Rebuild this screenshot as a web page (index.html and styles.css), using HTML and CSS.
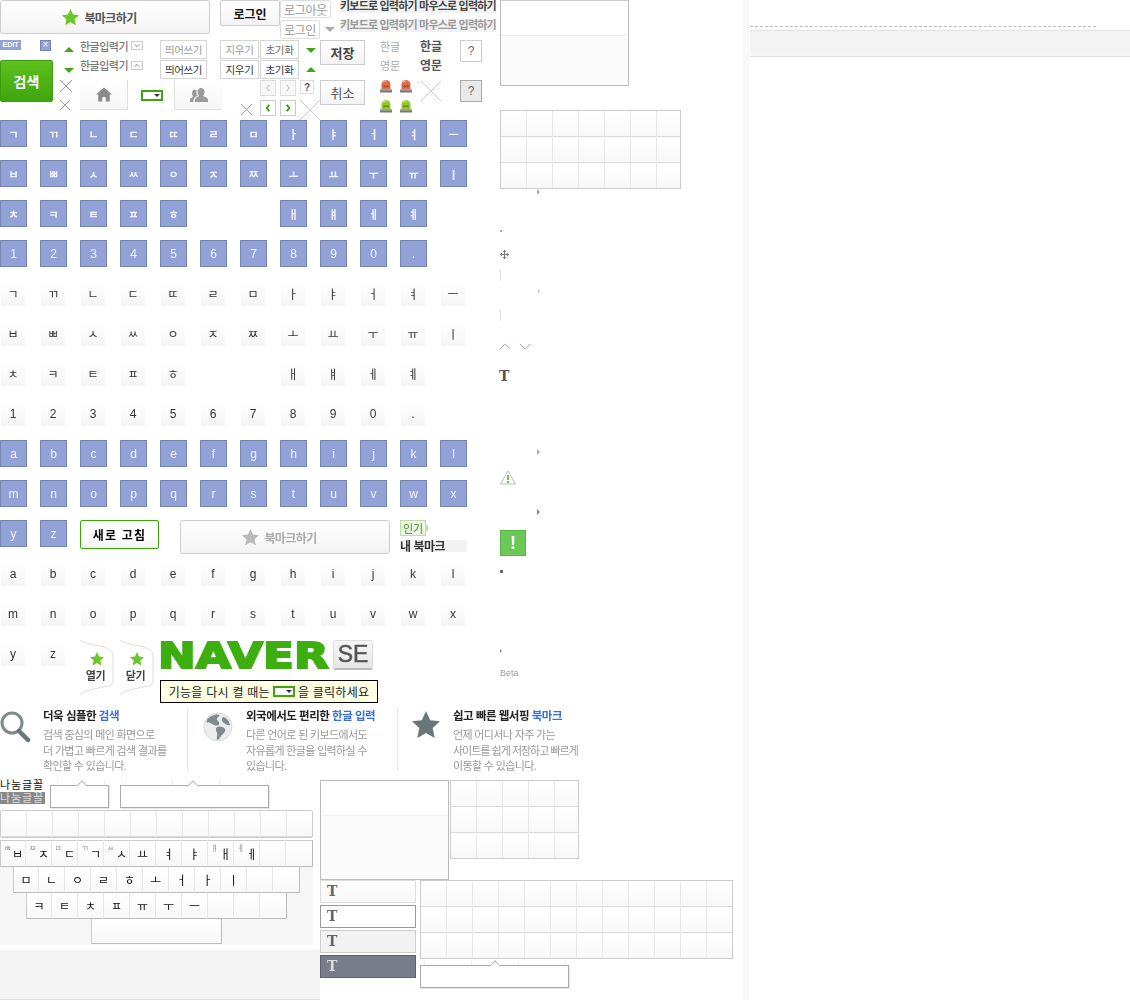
FILE: index.html
```html
<!DOCTYPE html>
<html lang="ko">
<head>
  <meta charset="UTF-8">
  <title>Naver SE sprite</title>
  <link rel="stylesheet" href="styles.css">
</head>
<body>
<svg class="defs" width="0" height="0">
  <symbol id="star" viewBox="0 0 20 20"><path d="M10 0l3 6.600 7 .8-5.200 4.800 1.400 7L10 15.700l-6.200 3.500 1.400-7L0 7.400l7-.8z"/></symbol>
  <symbol id="cross" viewBox="0 0 20 20"><path d="M0 0L20 20M20 0L0 20" fill="none" stroke="currentColor" stroke-width="1" vector-effect="non-scaling-stroke"/></symbol>
  <symbol id="lamp" viewBox="0 0 12 13"><path d="M1.500 9.500V4.500C1.500 2 3.500 0 6 0s4.500 2 4.500 4.500v5z" fill="currentColor"/><path d="M3 2.500C4 1.300 5.500 1 6.500 1" stroke="#fff" stroke-opacity=".6" fill="none"/><path d="M4 5v2.500M8 5v2.500M4.500 6.300h3" stroke="#5a3a20" stroke-opacity=".6" fill="none"/><path d="M0 9.500h12V12.500H0z" fill="#777"/><path d="M0 9.500h12v1H0z" fill="#aaa"/></symbol>
</svg>

<div class="sheet">

  <!-- big key grid, 40px cells -->
  <div class="keys">
    <b class="k ko">ㄱ</b><b class="k ko">ㄲ</b><b class="k ko">ㄴ</b><b class="k ko">ㄷ</b><b class="k ko">ㄸ</b><b class="k ko">ㄹ</b><b class="k ko">ㅁ</b><b class="k ko">ㅏ</b><b class="k ko">ㅑ</b><b class="k ko">ㅓ</b><b class="k ko">ㅕ</b><b class="k ko">ㅡ</b>
    <b class="k ko">ㅂ</b><b class="k ko">ㅃ</b><b class="k ko">ㅅ</b><b class="k ko">ㅆ</b><b class="k ko">ㅇ</b><b class="k ko">ㅈ</b><b class="k ko">ㅉ</b><b class="k ko">ㅗ</b><b class="k ko">ㅛ</b><b class="k ko">ㅜ</b><b class="k ko">ㅠ</b><b class="k ko">ㅣ</b>
    <b class="k ko">ㅊ</b><b class="k ko">ㅋ</b><b class="k ko">ㅌ</b><b class="k ko">ㅍ</b><b class="k ko">ㅎ</b><b class="k ko at8">ㅐ</b><b class="k ko">ㅒ</b><b class="k ko">ㅔ</b><b class="k ko">ㅖ</b>
    <b class="k at1">1</b><b class="k">2</b><b class="k">3</b><b class="k">4</b><b class="k">5</b><b class="k">6</b><b class="k">7</b><b class="k">8</b><b class="k">9</b><b class="k">0</b><b class="k">.</b>

    <b class="l at1">ㄱ</b><b class="l">ㄲ</b><b class="l">ㄴ</b><b class="l">ㄷ</b><b class="l">ㄸ</b><b class="l">ㄹ</b><b class="l">ㅁ</b><b class="l">ㅏ</b><b class="l">ㅑ</b><b class="l">ㅓ</b><b class="l">ㅕ</b><b class="l">ㅡ</b>
    <b class="l">ㅂ</b><b class="l">ㅃ</b><b class="l">ㅅ</b><b class="l">ㅆ</b><b class="l">ㅇ</b><b class="l">ㅈ</b><b class="l">ㅉ</b><b class="l">ㅗ</b><b class="l">ㅛ</b><b class="l">ㅜ</b><b class="l">ㅠ</b><b class="l">ㅣ</b>
    <b class="l">ㅊ</b><b class="l">ㅋ</b><b class="l">ㅌ</b><b class="l">ㅍ</b><b class="l">ㅎ</b><b class="l at8">ㅐ</b><b class="l">ㅒ</b><b class="l">ㅔ</b><b class="l">ㅖ</b>
    <b class="l at1">1</b><b class="l">2</b><b class="l">3</b><b class="l">4</b><b class="l">5</b><b class="l">6</b><b class="l">7</b><b class="l">8</b><b class="l">9</b><b class="l">0</b><b class="l">.</b>

    <b class="k at1">a</b><b class="k">b</b><b class="k">c</b><b class="k">d</b><b class="k">e</b><b class="k">f</b><b class="k">g</b><b class="k">h</b><b class="k">i</b><b class="k">j</b><b class="k">k</b><b class="k">l</b>
    <b class="k">m</b><b class="k">n</b><b class="k">o</b><b class="k">p</b><b class="k">q</b><b class="k">r</b><b class="k">s</b><b class="k">t</b><b class="k">u</b><b class="k">v</b><b class="k">w</b><b class="k">x</b>
    <b class="k">y</b><b class="k">z</b>

    <b class="l at1">a</b><b class="l">b</b><b class="l">c</b><b class="l">d</b><b class="l">e</b><b class="l">f</b><b class="l">g</b><b class="l">h</b><b class="l">i</b><b class="l">j</b><b class="l">k</b><b class="l">l</b>
    <b class="l">m</b><b class="l">n</b><b class="l">o</b><b class="l">p</b><b class="l">q</b><b class="l">r</b><b class="l">s</b><b class="l">t</b><b class="l">u</b><b class="l">v</b><b class="l">w</b><b class="l">x</b>
    <b class="l">y</b><b class="l">z</b>
  </div>

  <!-- top buttons -->
  <div class="s btn bm bm-on"><svg class="bm-star"><use href="#star"/></svg>북마크하기</div>
  <div class="s btn login">로그인</div>
  <div class="s btn thin logout">로그아웃</div>
  <div class="s btn thin login2">로그인</div>
  <i class="s tri tri-gray"></i>
  <div class="s mode mode-1">키보드로 입력하기 마우스로 입력하기</div>
  <div class="s mode mode-2">키보드로 입력하기 마우스로 입력하기</div>

  <div class="s edit">EDIT</div>
  <div class="s xbadge">×</div>
  <i class="s tri tri-up a1"></i>
  <i class="s tri tri-dn a2"></i>
  <div class="s hg hg-1">한글입력기</div>
  <div class="s hg hg-2">한글입력기</div>
  <div class="s chev chev-1"><svg viewBox="0 0 12 9"><path d="M3 3l3 3 3-3" fill="none" stroke="#666"/></svg></div>
  <div class="s chev chev-2"><svg viewBox="0 0 12 9"><path d="M3 6l3-3 3 3" fill="none" stroke="#666"/></svg></div>

  <div class="s btn sm sp-1">띄어쓰기</div>
  <div class="s btn sm dark sp-2">띄어쓰기</div>
  <div class="s btn sm er-1">지우기</div>
  <div class="s btn sm dark er-2">지우기</div>
  <div class="s btn sm mid in-1">초기화</div>
  <div class="s btn sm dark in-2">초기화</div>
  <i class="s tri tri-dn a3"></i>
  <i class="s tri tri-up a4"></i>
  <div class="s btn big save">저장</div>
  <div class="s btn big cancel">취소</div>

  <div class="s lang lang-1">한글</div>
  <div class="s lang on lang-2">한글</div>
  <div class="s lang lang-3">영문</div>
  <div class="s lang on lang-4">영문</div>
  <div class="s btn q q-1">?</div>
  <div class="s btn q q-2">?</div>

  <div class="s search">검색</div>
  <svg class="s x x-1"><use href="#cross"/></svg>
  <svg class="s x x-2"><use href="#cross"/></svg>
  <svg class="s x x-3"><use href="#cross"/></svg>
  <svg class="s x x-4"><use href="#cross"/></svg>
  <svg class="s x x-5"><use href="#cross"/></svg>

  <div class="s tab tab-home">
    <svg width="16" height="15" viewBox="0 0 18 16"><path d="M9 0L0 8h2.500v8h4.500v-5h4v5h4.500V8H18z" fill="#8b8b8b"/></svg>
  </div>
  <div class="s toggle toggle-1"><i></i></div>
  <div class="s tab tab-people">
    <svg width="18" height="14" viewBox="0 0 18 14"><path d="M11 0c2 0 3.500 1.500 3.500 3.800S13.500 7 13.200 8c1.800.8 4.800 2 4.800 3.500V14H5v-2.500c0-1.500 3-2.700 3.800-3.500C8.500 7 7.500 6 7.500 3.800S9 0 11 0zM5 1.500c.8 0 1.300.3 1.700.7-.8 2.300-.2 4.200 1 5.600C6 8.800 4 9.800 3.500 11.500V14H0v-2.500C0 10.300 2 9.500 3 8.500 2.500 7.500 2 6.800 2 4.800S3.300 1.500 5 1.500z" fill="#9a9a9a"/></svg>
  </div>

  <div class="s pg pg-1"><svg viewBox="0 0 16 16"><path d="M9.500 4.500L6.500 8l3 3.500" fill="none" stroke="#ccc" stroke-width="1.500"/></svg></div>
  <div class="s pg pg-2"><svg viewBox="0 0 16 16"><path d="M6.500 4.500L9.500 8l-3 3.500" fill="none" stroke="#ccc" stroke-width="1.500"/></svg></div>
  <div class="s btn q-small">?</div>
  <div class="s pg pg-3"><svg viewBox="0 0 16 16"><path d="M9.500 4.500L6.500 8l3 3.500" fill="none" stroke="#2a9c08" stroke-width="2"/></svg></div>
  <div class="s pg pg-4"><svg viewBox="0 0 16 16"><path d="M6.500 4.500L9.500 8l-3 3.500" fill="none" stroke="#2a9c08" stroke-width="2"/></svg></div>

  <svg class="s lamp lamp-1"><use href="#lamp"/></svg>
  <svg class="s lamp lamp-2"><use href="#lamp"/></svg>
  <svg class="s lamp lamp-3"><use href="#lamp"/></svg>
  <svg class="s lamp lamp-4"><use href="#lamp"/></svg>

  <!-- mid row items over the keys -->
  <div class="s refresh">새로 고침</div>
  <div class="s btn bm bm-off"><svg class="bm-star"><use href="#star"/></svg>북마크하기</div>
  <div class="s popular">인기</div>
  <i class="s popular-tip"></i>
  <div class="s mybm">내 북마크</div>

  <div class="s flag flag-1">
    <svg class="flag-bg" viewBox="0 0 34 55"><path d="M0 .500C10 6 24 5 30 10c3 2 3 4 3 7v23c0 4-2 5-5 6-8 2-20 3-28 8.500" fill="#fff" stroke="#ddd"/></svg>
    <svg class="flag-star"><use href="#star"/></svg>
    <span>열기</span>
  </div>
  <div class="s flag flag-2">
    <svg class="flag-bg" viewBox="0 0 34 55"><path d="M0 .500C10 6 24 5 30 10c3 2 3 4 3 7v23c0 4-2 5-5 6-8 2-20 3-28 8.500" fill="#fff" stroke="#ddd"/></svg>
    <svg class="flag-star"><use href="#star"/></svg>
    <span>닫기</span>
  </div>

  <div class="s logo">NAVER</div>
  <div class="s se">SE</div>
  <div class="s hint">기능을 다시 켤 때는 <span class="toggle toggle-2"><i></i></span> 을 클릭하세요</div>

  <!-- promo row -->
  <div class="s promo">
    <div class="promo-item item-1">
      <svg width="31" height="32" viewBox="0 0 31 32"><circle cx="12" cy="12" r="10" fill="#fff" stroke="#7d8b8e" stroke-width="3"/><path d="M19 20l9 9" stroke="#667578" stroke-width="4.500" stroke-linecap="round"/></svg>
      <div>
        <h3>더욱 심플한 <em>검색</em></h3>
        <p>검색 중심의 메인 화면으로<br>더 가볍고 빠르게 검색 결과를<br>확인할 수 있습니다.</p>
      </div>
    </div>
    <div class="promo-item item-2">
      <svg width="30" height="32" viewBox="0 0 30 32"><circle cx="15" cy="16" r="14" fill="#eceeee" stroke="#d5d8d8"/><path d="M7 6c3-2 7-3 9-2 1 2-2 2-2 4s3 2 2 5-5 1-7 0-4-3-5-1C3 9 5 7 7 6zM14 16c3-1 7 0 8 2s-1 4-3 6-3 5-5 5c-1-3 1-5 0-7s-2-4 0-6zM20 6c3 0 6 4 7 8-3 1-4-1-6-2s-3-4-1-6z" fill="#7d8b8e"/></svg>
      <div>
        <h3>외국에서도 편리한 <em>한글 입력</em></h3>
        <p>다른 언어로 된 키보드에서도<br>자유롭게 한글을 입력하실 수<br>있습니다.</p>
      </div>
    </div>
    <div class="promo-item item-3">
      <svg width="28" height="28" viewBox="0 0 20 20" fill="#67777a"><use href="#star"/></svg>
      <div>
        <h3>쉽고 빠른 웹서핑 <em>북마크</em></h3>
        <p>언제 어디서나 자주 가는<br><span class="tight">사이트를 쉽게 저장하고 빠르게</span><br>이동할 수 있습니다.</p>
      </div>
    </div>
  </div>

  <!-- bottom left -->
  <div class="s font-1">나눔글꼴</div>
  <div class="s font-2">나눔글꼴</div>
  <i class="s tabs tabs-1"></i>
  <i class="s tabs tabs-2"></i>
  <div class="s pop pop-1"></div>
  <div class="s pop pop-2"></div>

  <div class="s grid grid-12 g-a"></div>
  <div class="s kbd-bg"></div>
  <div class="s kbd">
    <div class="kbd-row">
      <div class="c"><u>ㅃ</u>ㅂ</div><div class="c"><u>ㅉ</u>ㅈ</div><div class="c"><u>ㄸ</u>ㄷ</div><div class="c"><u>ㄲ</u>ㄱ</div><div class="c"><u>ㅆ</u>ㅅ</div><div class="c">ㅛ</div><div class="c">ㅕ</div><div class="c">ㅑ</div><div class="c"><u>ㅒ</u>ㅐ</div><div class="c"><u>ㅖ</u>ㅔ</div><div class="c"></div><div class="c"></div>
    </div>
    <div class="kbd-row row-3">
      <div class="c">ㅁ</div><div class="c">ㄴ</div><div class="c">ㅇ</div><div class="c">ㄹ</div><div class="c">ㅎ</div><div class="c">ㅗ</div><div class="c">ㅓ</div><div class="c">ㅏ</div><div class="c">ㅣ</div><div class="c"></div><div class="c"></div>
    </div>
    <div class="kbd-row row-4">
      <div class="c">ㅋ</div><div class="c">ㅌ</div><div class="c">ㅊ</div><div class="c">ㅍ</div><div class="c">ㅠ</div><div class="c">ㅜ</div><div class="c">ㅡ</div><div class="c"></div><div class="c"></div><div class="c"></div>
    </div>
    <div class="kbd-row row-5"><div class="c space"></div></div>
  </div>
  <div class="s band"></div>

  <!-- bottom middle -->
  <div class="s split split-1"></div>
  <div class="s grid grid-5"></div>
  <div class="s tbtn t-1"><span>T</span></div>
  <div class="s tbtn t-2"><span>T</span></div>
  <div class="s tbtn t-3"><span>T</span></div>
  <div class="s tbtn t-4"><span>T</span></div>
  <div class="s grid grid-12 g-b"></div>
  <i class="s tabs tabs-3"></i>
  <div class="s pop pop-3"></div>

  <!-- right column -->
  <div class="s split split-2"></div>
  <div class="s grid grid-7"></div>
  <i class="s mini arr-1"></i>
  <i class="s dot dot-1"></i>
  <svg class="s move" viewBox="0 0 9 9"><path d="M4.500 0v9M0 4.500h9" stroke="#777"/><path d="M4.500 0l-2 2h4zM4.500 9l-2-2h4zM0 4.500l2-2v4zM9 4.500l-2-2v4z" fill="#777"/></svg>
  <i class="s vline v-1"></i>
  <i class="s mini arr-2"></i>
  <i class="s vline v-2"></i>
  <svg class="s caret caret-up" viewBox="0 0 14 8"><path d="M1 7l6-6 6 6" fill="none" stroke="#999"/></svg>
  <svg class="s caret caret-dn" viewBox="0 0 14 8"><path d="M1 1l6 6 6-6" fill="none" stroke="#999"/></svg>
  <div class="s serif-t">T</div>
  <i class="s mini arr-3"></i>
  <svg class="s warn" viewBox="0 0 16 15"><path d="M8 1l7.500 13H.5z" fill="#fff" stroke="#bbb"/><path d="M8 5v5M8 11v2" stroke="#3fa51c" stroke-width="1.500"/></svg>
  <i class="s mini arr-4"></i>
  <div class="s alert">!</div>
  <i class="s dot dot-2"></i>
  <i class="s mini arr-5"></i>
  <div class="s beta">Beta</div>

  <!-- far right -->
  <div class="s stripe"></div>
  <div class="s dash"></div>
  <div class="s bar"></div>
</div>
</body>
</html>
```
FILE: styles.css
```css
* { box-sizing: border-box; }

html, body {
  margin: 0;
  background: #fff;
}

body {
  font-family: "Noto Sans CJK KR", "Liberation Sans", sans-serif;
  font-size: 12px;
  color: #333;
}

.defs { position: absolute; }

.sheet {
  position: relative;
  width: 1130px;
  height: 1000px;
  overflow: hidden;
}

.s { position: absolute; }

/* keys */
.keys {
  position: absolute;
  left: 0;
  top: 120px;
  width: 480px;
  display: grid;
  grid-template-columns: repeat(12, 40px);
  grid-auto-rows: 40px;
  justify-items: start;
  align-items: start;
  will-change: transform;
}

.k, .l {
  display: flex;
  align-items: center;
  justify-content: center;
  font-weight: 400;
  font-family: "Liberation Sans", "Noto Sans CJK KR", sans-serif;
}

.k {
  width: 27px;
  height: 27px;
  background: #92a2d6;
  border: 1px solid #7484ae;
  color: #f0f3fc;
  font-size: 12px;
}

.k.ko { font-weight: 700; font-size: 11px; }

.l {
  width: 24px;
  height: 24px;
  margin: 2px 0 0 1px;
  padding-bottom: 1px;
  background: linear-gradient(#fff, #f5f5f5);
  color: #333;
  font-size: 12px;
}

.at1 { grid-column-start: 1; }
.at8 { grid-column-start: 8; }

/* buttons */
.btn {
  display: flex;
  align-items: center;
  justify-content: center;
  background: linear-gradient(#fff, #f3f3f3);
  border: 1px solid #ccc;
  border-radius: 2px;
  white-space: nowrap;
}

.bm {
  width: 210px;
  height: 34px;
  gap: 5px;
  font-size: 12px;
  font-weight: 700;
  letter-spacing: -0.6px;
  border-radius: 3px;
  padding-right: 11px;
}

.bm-star { width: 17px; height: 17px; }
.bm-on { left: 0; top: 0; color: #555; }
.bm-on .bm-star { fill: #6cc52a; }
.bm-off { left: 180px; top: 520px; color: #aaa; }
.bm-off .bm-star { fill: #bbb; }

.login { left: 220px; top: 0; width: 60px; height: 26px; color: #111; font-weight: 700; }

.thin { color: #999; background: #fff; border-color: #ddd; font-size: 12px; letter-spacing: -0.3px; }
.logout { left: 280px; top: 0; width: 51px; height: 18px; }
.login2 { left: 280px; top: 20px; width: 40px; height: 19px; }

.tri { width: 0; height: 0; border-left: 5px solid transparent; border-right: 5px solid transparent; }
.tri-gray { left: 325px; top: 27px; border-top: 5px solid #aaa; }
.tri-up { border-bottom: 5px solid #3fa51c; }
.tri-dn { border-top: 5px solid #3fa51c; }
.a1 { left: 64px; top: 47px; }
.a2 { left: 64px; top: 68px; }
.a3 { left: 306px; top: 48px; }
.a4 { left: 306px; top: 67px; }

.mode {
  left: 340px;
  font-family: "Liberation Sans", "Noto Sans CJK KR", sans-serif;
  font-size: 11px;
  font-weight: 700;
  line-height: 13px;
  letter-spacing: -0.8px;
  white-space: nowrap;
  background: #f2f2f2;
}
.mode-1 { top: 0; color: #444; }
.mode-2 { top: 19px; color: #999; }

.edit {
  left: 0; top: 40px; width: 21px; height: 10px;
  background: #92a2d6; color: #fff;
  font: 700 7px/10px "Liberation Sans", sans-serif;
  text-align: center;
}

.xbadge {
  left: 40px; top: 40px; width: 11px; height: 11px;
  background: #92a2d6; border: 1px solid #7484ae; color: #fff;
  font: 400 10px/8px "Liberation Sans", sans-serif;
  text-align: center;
}

.hg { left: 80px; font-size: 11px; line-height: 12px; font-weight: 500; letter-spacing: -0.5px; color: #777; }
.hg-1 { top: 40px; }
.hg-2 { top: 59px; }

.chev { left: 131px; width: 12px; height: 9px; border: 1px solid #ccc; background: #fff; }
.chev svg { display: block; width: 10px; height: 7px; }
.chev-1 { top: 41px; }
.chev-2 { top: 61px; }

.sm { width: 39px; height: 19px; font-size: 10.500px; letter-spacing: -0.4px; color: #999; background: #fff; border-color: #d5d5d5; border-radius: 0; }
.sm.dark { color: #333; }
.sm.mid { color: #666; }
.sp-1, .sp-2 { left: 160px; width: 47px; }
.sp-1 { top: 40px; }
.sp-2 { top: 60px; }
.er-1, .er-2 { left: 220px; }
.in-1, .in-2 { left: 260px; }
.er-1, .in-1 { top: 40px; }
.er-2, .in-2 { top: 60px; }

.big { left: 320px; width: 45px; height: 25px; font-size: 13px; border-radius: 0; }
.save { top: 40px; font-weight: 700; color: #444; }
.cancel { top: 80px; color: #555; }

.lang { font-size: 11px; line-height: 12px; color: #aaa; }
.lang.on { font-weight: 700; color: #555; font-size: 12px; }
.lang-1, .lang-3 { left: 380px; }
.lang-2, .lang-4 { left: 420px; }
.lang-1, .lang-2 { top: 40px; }
.lang-3, .lang-4 { top: 59px; }

.q { width: 22px; height: 22px; color: #666; border-radius: 0; font-family: "Liberation Sans", sans-serif; }
.q-1 { left: 460px; top: 40px; background: #fff; }
.q-2 { left: 460px; top: 80px; background: #e9e9e9; border-color: #aaa; }

.search {
  left: 0; top: 60px; width: 53px; height: 42px;
  display: flex; align-items: center; justify-content: center;
  background: linear-gradient(#5fc01f, #3da60c);
  border: 1px solid #3b9d0b;
  border-radius: 2px;
  color: #fff;
  font-size: 14px;
  font-weight: 700;
}

.x { color: #999; }
.x-1 { left: 60px; top: 80px; width: 12px; height: 12px; }
.x-2 { left: 60px; top: 100px; width: 10px; height: 10px; }
.x-3 { left: 241px; top: 104px; width: 11px; height: 11px; }
.x-4 { left: 300px; top: 100px; width: 20px; height: 20px; color: #ccc; }
.x-5 { left: 421px; top: 81px; width: 20px; height: 20px; color: #ccc; }

.tab {
  top: 80px; width: 48px; height: 30px;
  display: flex; align-items: center; justify-content: center;
  background: linear-gradient(#fff, #f6f6f6);
  border-bottom: 1px solid #ddd;
}
.tab-home { left: 80px; border-right: 1px solid #ddd; }
.tab-people { left: 174px; border-left: 1px solid #ddd; }

.toggle {
  display: inline-block;
  position: relative;
  width: 22px; height: 11px;
  background: #fff;
  border: 2px solid #3da60c;
}
.toggle i {
  position: absolute; right: 1px; top: 2px;
  border-left: 3px solid transparent;
  border-right: 3px solid transparent;
  border-top: 3px solid #333;
}
.toggle-1 { left: 141px; top: 90px; position: absolute; }

.pg { width: 16px; height: 16px; border: 1px solid #ddd; background: #f7f7f7; }
.pg svg { display: block; width: 14px; height: 14px; }
.pg-1 { left: 260px; top: 80px; }
.pg-2 { left: 280px; top: 80px; }
.pg-3 { left: 260px; top: 100px; background: #fff; border-color: #ccc; }
.pg-4 { left: 280px; top: 100px; background: #fff; border-color: #ccc; }

.q-small { left: 300px; top: 80px; width: 14px; height: 14px; background: #fff; font: 700 10px "Liberation Sans", sans-serif; color: #555; border-color: #ddd; border-radius: 0; }

.lamp { width: 12px; height: 13px; }
.lamp-1, .lamp-2 { color: #de6a48; }
.lamp-3, .lamp-4 { color: #93c82a; }
.lamp-1 { left: 380px; top: 80px; }
.lamp-2 { left: 400px; top: 80px; }
.lamp-3 { left: 380px; top: 100px; }
.lamp-4 { left: 400px; top: 100px; }

.refresh {
  left: 80px; top: 520px; width: 79px; height: 29px;
  display: flex; align-items: center; justify-content: center;
  background: linear-gradient(#fff 60%, #f2f2f2);
  border: 1px solid #36a80a;
  border-radius: 2px;
  color: #000;
  font-size: 12px;
  font-weight: 700;
  letter-spacing: 1.2px;
}

.popular {
  left: 400px; top: 520px; width: 26px; height: 16px;
  background: #eef7e4; border: 1px solid #bcdca8;
  color: #3c8a1e;
  font-size: 11px; line-height: 14px; text-align: center;
}
.popular-tip {
  left: 426px; top: 524px;
  border-left: 3px solid #bcdca8;
  border-top: 4px solid transparent;
  border-bottom: 4px solid transparent;
}

.mybm {
  left: 400px; top: 540px; width: 67px; height: 12px;
  background: #f2f2f2; color: #333;
  font-size: 12px; line-height: 12px; font-weight: 700;
  letter-spacing: -0.5px; white-space: nowrap;
}

.flag {
  top: 640px; width: 34px; height: 55px;
  display: flex; flex-direction: column; align-items: center;
  padding: 12px 0 0 0;
  font-size: 11px; font-weight: 700; color: #444;
}
.flag-1 { left: 80px; }
.flag-2 { left: 120px; }
.flag-bg { position: absolute; left: 0; top: 0; width: 34px; height: 55px; }
.flag-star { position: relative; width: 14px; height: 14px; fill: #6cc52a; }
.flag span { position: relative; line-height: 12px; margin: 3px 3px 0 0; letter-spacing: -0.3px; }

.logo {
  left: 158px; top: 634px;
  font: 700 36px/44px "DejaVu Sans", sans-serif;
  color: #3dae10;
  -webkit-text-stroke: 2px #3dae10;
  letter-spacing: 0.2px;
  transform: scaleX(1.25);
  transform-origin: left top;
}

.se {
  left: 333px; top: 640px; width: 40px; height: 30px;
  background: linear-gradient(#f6f6f6, #e6e6e6);
  border: 1px solid #ddd;
  border-bottom: 2px solid #bbb;
  border-radius: 3px;
  color: #555;
  font: 400 23px/27px "Liberation Sans", sans-serif;
  -webkit-text-stroke: 0.5px #555;
  text-align: center;
}

.hint {
  left: 160px; top: 680px; width: 218px; height: 23px;
  display: flex; align-items: center; justify-content: center; gap: 3px;
  background: #ffffe4;
  border: 1px solid #000;
  color: #222;
  font-size: 12px;
  letter-spacing: 0.25px;
  white-space: nowrap;
}

/* promo */
.promo {
  left: 0; top: 708px;
  display: flex;
}

.promo-item {
  display: flex;
  align-items: flex-start;
  height: 63px;
  border-right: 1px solid #e6e6e6;
  white-space: nowrap;
}

.promo-item svg { flex: none; margin-top: 3px; }
.item-1 { width: 188px; gap: 12px; }
.item-2 { width: 210px; padding-left: 15px; gap: 13px; }
.item-3 { width: 190px; padding-left: 14px; gap: 13px; border-right: 0; }

.promo-item h3 {
  margin: 0 0 4px;
  font-size: 11.500px;
  line-height: 15px;
  font-weight: 700;
  letter-spacing: -0.5px;
  color: #222;
}
.promo-item em { font-style: normal; color: #3b6fe0; }
.promo-item p {
  margin: 0;
  font-size: 11px;
  line-height: 15.500px;
  letter-spacing: -0.65px;
  color: #999;
}
.promo-item .tight { letter-spacing: -1px; }

/* bottom left */
.font-1, .font-2 {
  left: 0;
  width: 45px;
  font-family: "Liberation Sans", "Noto Sans CJK KR", sans-serif;
  font-size: 11px;
  line-height: 12px;
  letter-spacing: 0.9px;
  white-space: nowrap;
}
.font-1 { top: 779px; color: #111; }
.font-2 { top: 792px; height: 12px; background: #888; color: #ddd; }

.tabs {
  top: 780px; height: 5px;
  background: repeating-linear-gradient(to right, #eee 0, #eee 1px, #fff 1px, #fff 47px);
}
.tabs-1 { left: 57px; width: 48px; }
.tabs-2 { left: 125px; width: 145px; }
.tabs-3 { left: 424px; top: 960px; width: 142px; }

.pop {
  height: 23px;
  background: #fff;
  border: 1px solid #aaa;
  box-shadow: 1px 1px 1px #e8e8e8;
}
.pop::before {
  content: "";
  position: absolute;
  left: 27px; top: -4px;
  width: 7px; height: 7px;
  background: #fff;
  border-left: 1px solid #bbb;
  border-top: 1px solid #bbb;
  transform: rotate(45deg);
}
.pop-1 { left: 50px; top: 785px; width: 59px; }
.pop-2 { left: 120px; top: 785px; width: 149px; }
.pop-2::before { left: 68px; }
.pop-3 { left: 420px; top: 965px; width: 149px; }
.pop-3::before { left: 70px; }

/* empty key grids */
.grid {
  background:
    linear-gradient(to right, transparent 25px, #e8e8e8 25px) 0 0 / 26px 26px,
    linear-gradient(#fff 0, #f8f8f8 25px, #d9d9d9 25px) 0 0 / 26px 26px;
  border: 1px solid #ccc;
}
.grid-12 { width: 313px; }
.g-a { left: 0; top: 810px; height: 28px; border-radius: 2px; }
.g-b { left: 420px; top: 880px; height: 79px; }
.grid-5 { left: 450px; top: 780px; width: 129px; height: 79px; }
.grid-7 { left: 500px; top: 110px; width: 181px; height: 79px; }

.kbd-bg { left: 0; top: 867px; width: 313px; height: 78px; background: #f6f6f6; }

.kbd {
  left: 0; top: 840px;
  width: 313px;
  display: flex;
  flex-direction: column;
  will-change: transform;
}
.kbd-row { display: flex; }
.row-3 { margin-left: 13px; }
.row-4 { margin-left: 26px; }
.row-5 { margin-left: 91px; }
.c {
  position: relative;
  width: 26px;
  height: 26px;
  display: flex;
  align-items: flex-end;
  justify-content: center;
  padding-bottom: 2px;
  background: linear-gradient(#fff, #f8f8f8);
  border-right: 1px solid #e8e8e8;
  border-bottom: 1px solid #bbb;
  color: #111;
  font-size: 12px;
  line-height: 20px;
}
.kbd-row .c:first-child { border-left: 1px solid #ccc; }
.kbd-row .c:last-child { border-right: 1px solid #bbb; width: 27px; }
.kbd-row:first-child .c { border-top: 1px solid #ccc; height: 27px; }
.c u { position: absolute; left: 3px; top: 3px; font-size: 8px; line-height: 8px; color: #999; text-decoration: none; }
.c:has(u) { justify-content: flex-end; padding-right: 2px; }
.kbd-row .c.space { width: 131px; height: 25px; }

.band {
  left: 0; top: 950px; width: 320px; height: 50px;
  background: #f3f3f3;
  border-bottom: 1px solid #ddd;
}

/* split boxes */
.split {
  width: 129px;
  background: linear-gradient(#fff 34px, #eee 34px, #eee 35px, #fbfbfb 35px);
  border: 1px solid #bbb;
}
.split-1 { left: 320px; top: 780px; height: 100px; }
.split-2 { left: 500px; top: 0; height: 86px; border-top-color: #ccc; }

.tbtn { left: 320px; width: 96px; height: 23px; border: 1px solid #ddd; background: linear-gradient(#fff, #f6f6f6); padding-left: 6px; }
.tbtn span { font: 700 14px/20px "DejaVu Serif", serif; color: #666; }
.t-1 { top: 880px; }
.t-2 { top: 905px; border-color: #999; background: #fff; }
.t-3 { top: 930px; background: #f2f2f2; border-color: #ccc; }
.t-4 { top: 955px; background: #797c8b; border-color: #5d6070; }
.t-4 span { color: #ddd; }

/* small bits in right column */
.mini { border-left: 3px solid #aaa; border-top: 3px solid transparent; border-bottom: 3px solid transparent; }
.arr-1 { left: 537px; top: 189px; }
.arr-2 { left: 538px; top: 289px; border-left-width: 2px; border-left-color: #bbb; border-top-width: 2px; border-bottom-width: 2px; }
.arr-3 { left: 537px; top: 449px; }
.arr-4 { left: 537px; top: 509px; border-left-color: #888; }
.arr-5 { left: 500px; top: 649px; border-left-width: 2px; border-left-color: #888; border-top-width: 2px; border-bottom-width: 2px; }

.dot { background: #aaa; }
.dot-1 { left: 500px; top: 230px; width: 2px; height: 2px; }
.dot-2 { left: 500px; top: 570px; width: 3px; height: 3px; background: #666; }

.move { left: 500px; top: 250px; width: 9px; height: 9px; }
.vline { left: 500px; width: 1px; height: 11px; background: #ddd; }
.v-1 { top: 270px; }
.v-2 { top: 310px; }
.caret { top: 343px; width: 12px; height: 7px; }
.caret-up { left: 499px; }
.caret-dn { left: 519px; }

.serif-t { left: 499px; top: 367px; font: 700 14px/18px "DejaVu Serif", serif; color: #555; }

.warn { left: 500px; top: 470px; width: 16px; height: 15px; }

.alert {
  left: 500px; top: 530px; width: 26px; height: 26px;
  background: #6cc958;
  border: 1px solid #57b744;
  color: #fff;
  font: 700 18px/24px "Liberation Sans", sans-serif;
  text-align: center;
}

.beta { left: 500px; top: 668px; font: 400 9px/11px "Liberation Sans", sans-serif; color: #999; }

/* far right */
.stripe { left: 743px; top: 0; width: 6px; height: 1000px; background: #f8f8f8; }
.dash { left: 750px; top: 26px; width: 346px; border-top: 1px dashed #bbb; }
.bar {
  left: 750px; top: 30px; width: 380px; height: 27px;
  background: #f3f3f3;
  border-top: 1px solid #e2e2e2;
  border-bottom: 1px solid #e2e2e2;
  box-shadow: inset 0 -2px 0 #f9f9f9;
}
```
